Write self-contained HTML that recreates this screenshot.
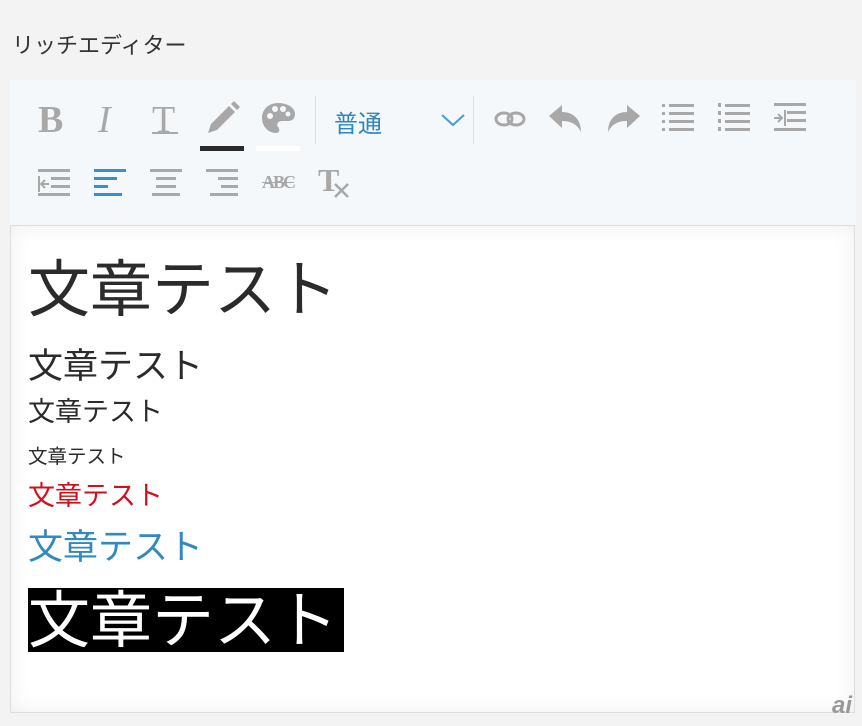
<!DOCTYPE html>
<html><head><meta charset="utf-8"><style>
body{margin:0;width:862px;height:726px;background:#f4f3f4;font-family:"Liberation Sans","Noto Sans CJK JP",sans-serif;position:relative;overflow:hidden}
.t{position:absolute;left:12px;top:28px;font-size:22px;color:#333}
.tb{position:absolute;left:10px;top:80px;width:846px;height:145px;background:#f5f8fa}
.ed{position:absolute;left:10px;top:225px;width:843px;height:486px;background:#fff;border:1px solid #ddd;box-shadow:inset 0 0 20px rgba(0,0,0,.07)}
.l{position:absolute;left:28px;white-space:nowrap;line-height:1}
svg{position:absolute}
.g{fill:#a8a8a8}
</style></head><body>
<div class="t">リッチエディター</div>
<div class="tb"></div>
<div style="position:absolute;left:38px;top:98px;font:bold 38px 'Liberation Serif',serif;color:#a8a8a8">B</div>
<div style="position:absolute;left:98px;top:98px;font:italic 38px 'Liberation Serif',serif;color:#a8a8a8">I</div>
<div style="position:absolute;left:152px;top:98px;font:38px 'Liberation Serif',serif;color:#a8a8a8">T</div>
<div style="position:absolute;left:152px;top:132px;width:26px;height:2px;background:#a8a8a8"></div>
<svg style="left:205px;top:100px" width="36" height="36" viewBox="0 0 36 36"><path class="g" d="M3 33 L6 24 L24 6 L30 12 L12 30 Z M26 4 L29 1 L35 7 L32 10 Z"/></svg>
<div style="position:absolute;left:200px;top:146px;width:44px;height:5px;background:#2b2b2b"></div>
<svg style="left:260px;top:100px" width="36" height="36" viewBox="0 0 36 36"><path class="g" d="M18 3C8 3 2 10 2 18c0 8 6 15 14 15 4 0 4-4 2-6-2-3 0-6 4-6h6c5 0 7-3 7-7C35 8 28 3 18 3z"/><circle cx="10" cy="16" r="3" fill="#f5f8fa"/><circle cx="15" cy="9" r="3" fill="#f5f8fa"/><circle cx="23" cy="9" r="3" fill="#f5f8fa"/><circle cx="28" cy="14" r="2.5" fill="#f5f8fa"/></svg>
<div style="position:absolute;left:256px;top:146px;width:44px;height:5px;background:#fff"></div>
<div style="position:absolute;left:315px;top:96px;width:1px;height:48px;background:#ddd"></div>
<div style="position:absolute;left:334px;top:104px;font-size:24px;color:#2f86c0">普通</div>
<svg style="left:440px;top:112px" width="26" height="16" viewBox="0 0 26 16"><path d="M2 3 L13 13 L24 3" stroke="#4b9ad0" stroke-width="2" fill="none"/></svg>
<div style="position:absolute;left:473px;top:96px;width:1px;height:48px;background:#ddd"></div>
<svg style="left:493px;top:110px" width="34" height="18" viewBox="0 0 34 18"><ellipse cx="11" cy="9" rx="8" ry="6" stroke="#a8a8a8" stroke-width="3" fill="none"/><ellipse cx="23" cy="9" rx="8" ry="6" stroke="#a8a8a8" stroke-width="3" fill="none"/></svg>
<svg style="left:548px;top:104px" width="36" height="30" viewBox="0 0 36 30"><path class="g" d="M1 12 L14 1 L14 8 C26 8 33 16 33 28 C29 20 23 17 14 17 L14 24 Z"/></svg>
<svg style="left:605px;top:104px" width="36" height="30" viewBox="0 0 36 30"><path class="g" d="M35 12 L22 1 L22 8 C10 8 3 16 3 28 C7 20 13 17 22 17 L22 24 Z"/></svg>
<svg style="left:661px;top:103px" width="34" height="30" viewBox="0 0 34 30"><g class="g"><rect x="1" y="1" width="3" height="3"/><rect x="1" y="9" width="3" height="3"/><rect x="1" y="17" width="3" height="3"/><rect x="1" y="25" width="3" height="3"/><rect x="8" y="1" width="25" height="3"/><rect x="8" y="9" width="25" height="3"/><rect x="8" y="17" width="25" height="3"/><rect x="8" y="25" width="25" height="3"/></g></svg>
<svg style="left:717px;top:102px" width="34" height="32" viewBox="0 0 34 32"><g class="g"><rect x="1" y="1" width="3" height="4"/><rect x="1" y="9" width="3" height="4"/><rect x="1" y="17" width="3" height="4"/><rect x="1" y="25" width="3" height="4"/><rect x="8" y="2" width="25" height="3"/><rect x="8" y="10" width="25" height="3"/><rect x="8" y="18" width="25" height="3"/><rect x="8" y="26" width="25" height="3"/></g></svg>
<svg style="left:773px;top:102px" width="34" height="32" viewBox="0 0 34 32"><g class="g"><rect x="1" y="1" width="32" height="3"/><rect x="14" y="9" width="19" height="3"/><rect x="14" y="17" width="19" height="3"/><rect x="1" y="26" width="32" height="3"/><rect x="11" y="8" width="2" height="16"/></g><path d="M1 16 H9 M5 12 L9 16 L5 20" stroke="#a8a8a8" stroke-width="2" fill="none"/></svg>
<svg style="left:37px;top:168px" width="34" height="30" viewBox="0 0 34 30"><g class="g"><rect x="1" y="1" width="32" height="3"/><rect x="14" y="9" width="19" height="3"/><rect x="14" y="17" width="19" height="3"/><rect x="1" y="25" width="32" height="3"/><rect x="1" y="8" width="2" height="16"/></g><path d="M12 16 H4 M8 12 L4 16 L8 20" stroke="#a8a8a8" stroke-width="2" fill="none"/></svg>
<svg style="left:93px;top:168px" width="34" height="30" viewBox="0 0 34 30"><g fill="#3b8fcf"><rect x="1" y="1" width="32" height="3"/><rect x="1" y="9" width="23" height="3"/><rect x="1" y="17" width="14" height="3"/><rect x="1" y="25" width="28" height="3"/></g></svg>
<svg style="left:149px;top:168px" width="34" height="30" viewBox="0 0 34 30"><g class="g"><rect x="1" y="1" width="32" height="3"/><rect x="7" y="9" width="20" height="3"/><rect x="7" y="17" width="20" height="3"/><rect x="3" y="25" width="28" height="3"/></g></svg>
<svg style="left:205px;top:168px" width="34" height="30" viewBox="0 0 34 30"><g class="g"><rect x="1" y="1" width="32" height="3"/><rect x="13" y="9" width="20" height="3"/><rect x="16" y="17" width="17" height="3"/><rect x="5" y="25" width="28" height="3"/></g></svg>
<div style="position:absolute;left:262px;top:172px;font:bold 18px 'Liberation Serif',serif;color:#a8a8a8;letter-spacing:-2px;text-decoration:line-through">ABC</div>
<div style="position:absolute;left:318px;top:162px;font:bold 32px 'Liberation Serif',serif;color:#a8a8a8">T</div>
<svg style="left:333px;top:182px" width="18" height="18" viewBox="0 0 18 18"><path d="M2 2 L15 15 M15 2 L2 15" stroke="#a8a8a8" stroke-width="2.5"/></svg>
<div class="ed"></div>
<div class="l" style="top:260px;font-size:62px;color:#2b2b2b">文章テスト</div>
<div class="l" style="top:349px;font-size:35px;color:#2b2b2b">文章テスト</div>
<div class="l" style="top:399px;font-size:27px;color:#2b2b2b">文章テスト</div>
<div class="l" style="top:448px;font-size:19.5px;color:#2b2b2b">文章テスト</div>
<div class="l" style="top:483px;font-size:27px;color:#d0101b">文章テスト</div>
<div class="l" style="top:530px;font-size:35px;color:#3189c0">文章テスト</div>
<div class="l" style="top:588px;height:64px;width:316px;background:#000"></div>
<div class="l" style="top:591px;font-size:62px;color:#fff">文章テスト</div>
<div style="position:absolute;left:832px;top:692px;font:italic bold 24px 'Liberation Sans',sans-serif;color:#999">ai</div>
</body></html>
